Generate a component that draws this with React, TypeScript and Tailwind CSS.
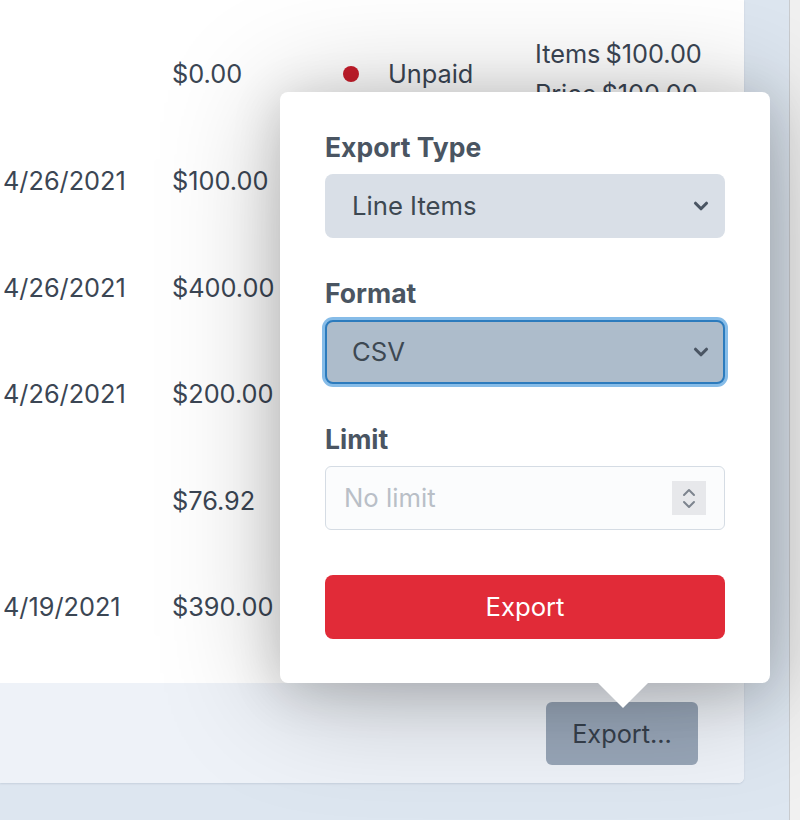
import React from "react";

function Chevron() {
  return (
    <svg width="22" height="22" viewBox="0 0 24 24" fill="none" stroke="#4a5563" strokeWidth="3.4" strokeLinecap="round" strokeLinejoin="round">
      <path d="M6 9l6 6 6-6" />
    </svg>
  );
}

function Spinner() {
  return (
    <div className="flex h-[34px] w-[34px] flex-col items-center justify-center gap-[3px] bg-[#e7e8eb]">
      <svg width="14" height="9" viewBox="0 0 14 9" fill="none" stroke="#7d848e" strokeWidth="2" strokeLinecap="round" strokeLinejoin="round">
        <path d="M2 7l5-5 5 5" />
      </svg>
      <svg width="14" height="9" viewBox="0 0 14 9" fill="none" stroke="#7d848e" strokeWidth="2" strokeLinecap="round" strokeLinejoin="round">
        <path d="M2 2l5 5 5-5" />
      </svg>
    </div>
  );
}

const rows = [
  { date: "", amount: "$0.00", first: true },
  { date: "4/26/2021", amount: "$100.00" },
  { date: "4/26/2021", amount: "$400.00" },
  { date: "4/26/2021", amount: "$200.00" },
  { date: "", amount: "$76.92" },
  { date: "4/19/2021", amount: "$390.00" },
];

export default function App() {
  return (
    <div className="flex h-[820px] w-[800px] overflow-hidden bg-[#dde6f0] font-[Inter,'Noto_Sans',sans-serif] text-[25.3px] text-[#3b4654]">
      <div className="relative flex-1 pb-[37px] pr-[45px]">
        <div className="flex h-full flex-col overflow-hidden rounded-br-[6px] bg-white shadow-[0_1px_2px_rgba(30,50,80,0.12)]">
          <div className="flex-1 pt-[21px]">
            {rows.map((r, i) => (
              <div key={i} className="flex h-[106.6px] items-center">
                <div className="w-[172px] pl-[3px]">{r.date}</div>
                <div className="w-[171px]">{r.amount}</div>
                {r.first && (
                  <>
                    <div className="flex w-[192px] items-center">
                      <span className="h-[16px] w-[16px] rounded-full bg-[#c81d2b]" />
                      <span className="ml-[29px]">Unpaid</span>
                    </div>
                    <div className="flex flex-col leading-[40px]">
                      <div className="flex gap-[5px]">
                        <span>Items</span>
                        <span>$100.00</span>
                      </div>
                      <div className="flex gap-[5px]">
                        <span>Price</span>
                        <span>$100.00</span>
                      </div>
                    </div>
                  </>
                )}
              </div>
            ))}
          </div>
          <div className="flex h-[100px] items-start justify-end bg-[#eef2f8] pr-[46px] pt-[19px]">
            <button className="h-[63px] w-[152px] rounded-[6px] bg-[#98a6b8] text-[#36404c]">Export...</button>
          </div>
        </div>

        <div className="absolute left-[280px] top-[92px] w-[490px] rounded-[8px] bg-white px-[45px] pb-[44px] pt-[39px] shadow-[0_8px_50px_rgba(0,0,0,0.16),0_10px_120px_rgba(0,0,0,0.26)]">
          <div className="text-[26.5px] font-bold leading-[32px] text-[#4a5562]">Export Type</div>
          <div className="mt-[11px] flex h-[64px] items-center justify-between rounded-[8px] bg-[#d9dfe7] pl-[27px] pr-[13px] text-[25.7px] text-[#3d4852]">
            <span>Line Items</span>
            <Chevron />
          </div>

          <div className="mt-[39px] text-[26.5px] font-bold leading-[32px] text-[#4a5562]">Format</div>
          <div className="mt-[11px] flex h-[64px] items-center justify-between rounded-[8px] border-2 border-[#2c7bbd] bg-[#adbccb] pl-[25px] pr-[11px] text-[25.7px] text-[#3d4852] shadow-[0_0_0_3px_#86bce8]">
            <span>CSV</span>
            <Chevron />
          </div>

          <div className="mt-[39px] text-[26.5px] font-bold leading-[32px] text-[#4a5562]">Limit</div>
          <div className="mt-[11px] flex h-[64px] items-center justify-between rounded-[6px] border border-[#d5dce4] bg-[#fbfcfd] pl-[18px] pr-[18px] text-[25.7px]">
            <span className="text-[#b9bfc7]">No limit</span>
            <Spinner />
          </div>

          <button className="mt-[45px] flex h-[64px] w-full items-center justify-center rounded-[8px] bg-[#e12b38] text-[25.7px] text-white">
            Export
          </button>

          <div className="absolute bottom-[-25px] left-[317px] h-0 w-0 border-l-[26px] border-r-[26px] border-t-[26px] border-l-transparent border-r-transparent border-t-white" />
        </div>
      </div>
      <div className="w-px bg-[#c9cbce]" />
      <div className="w-[10px] bg-[#f1f1f1]" />
    </div>
  );
}
